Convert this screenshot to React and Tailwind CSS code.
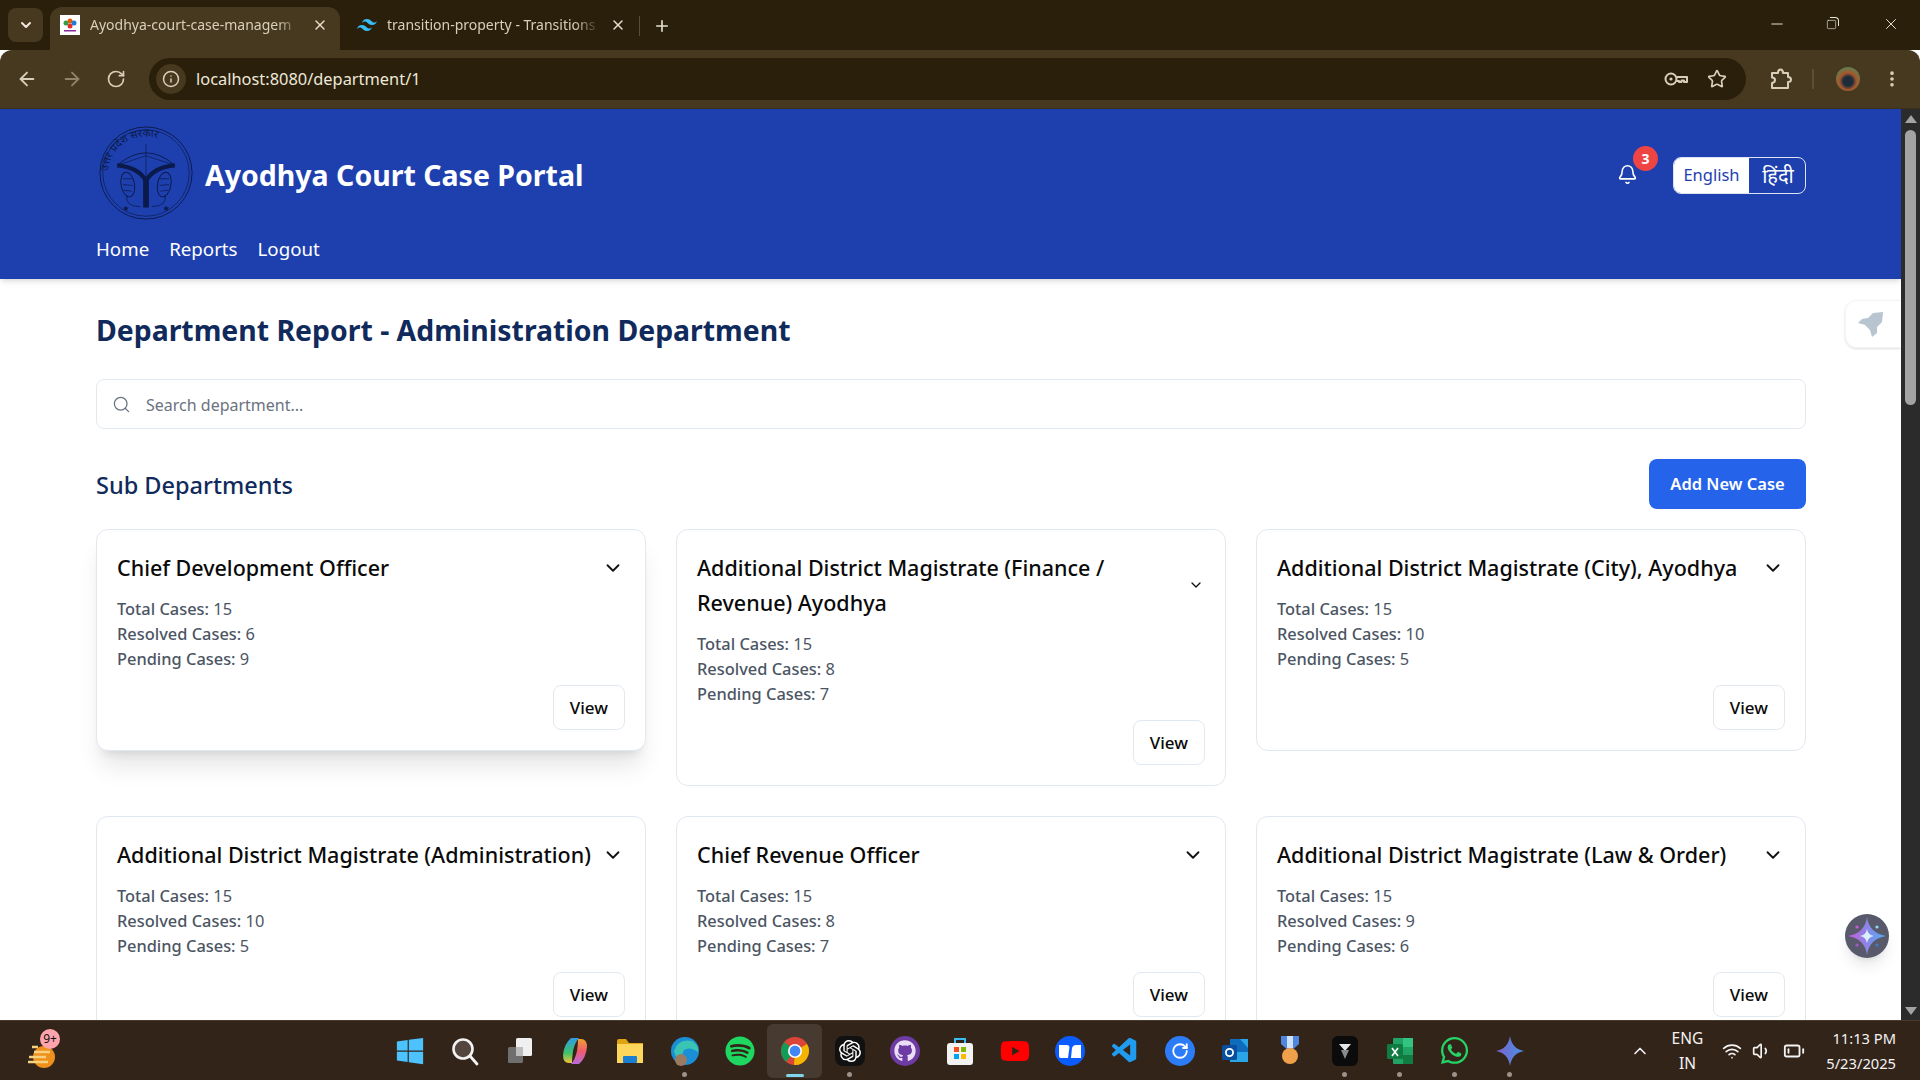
import React from 'react';
import { ArrowLeft, ArrowRight, Bell, ChevronDown, ChevronUp, EllipsisVertical, Info, Minus, Plus, RotateCw, Search, Square, Star, X, Wifi, Volume1, BatteryLow } from 'lucide-react';
import { FaSpotify, FaGithub, FaWhatsapp, FaYoutube, FaWindows } from 'react-icons/fa';
import { SiTailwindcss, SiOpenai } from 'react-icons/si';
import { VscVscode } from 'react-icons/vsc';

const font = { fontFamily: '"Noto Sans", "Open Sans", sans-serif' };

const departments = [
  { name: 'Chief Development Officer', total: 15, resolved: 6, pending: 9, hover: true },
  { name: 'Additional District Magistrate (Finance / Revenue) Ayodhya', total: 15, resolved: 8, pending: 7, small: true },
  { name: 'Additional District Magistrate (City), Ayodhya', total: 15, resolved: 10, pending: 5 },
  { name: 'Additional District Magistrate (Administration)', total: 15, resolved: 10, pending: 5 },
  { name: 'Chief Revenue Officer', total: 15, resolved: 8, pending: 7 },
  { name: 'Additional District Magistrate (Law & Order)', total: 15, resolved: 9, pending: 6 },
];

// UP government emblem
const Emblem = () => (
  <svg viewBox="0 0 100 100" className="w-[96px] h-[96px] shrink-0" fill="none" stroke="#0b1a4a">
    <circle cx="50" cy="50" r="48" strokeWidth="1" />
    <circle cx="50" cy="50" r="45" strokeWidth="0.7" />
    <path id="emblemArc" d="M10 52 A40 40 0 0 1 90 52" stroke="none" />
    <text fontSize="11" fill="#0b1a4a" stroke="none" style={{ fontFamily: '"Noto Sans", sans-serif' }}>
      <textPath href="#emblemArc" startOffset="3%">उत्तर प्रदेश सरकार</textPath>
    </text>
    <path d="M20 42 Q50 16 80 42" strokeWidth="1" />
    <path d="M20 42 L50 32 L80 42 M50 20 V56" strokeWidth="0.7" />
    <path d="M20 42 Q42 44 50 58 Q58 44 80 42" strokeWidth="4.5" />
    <path d="M50 56 V86" strokeWidth="6" />
    <ellipse cx="31" cy="62" rx="7" ry="13" strokeWidth="1" transform="rotate(-10 31 62)" />
    <ellipse cx="69" cy="62" rx="7" ry="13" strokeWidth="1" transform="rotate(10 69 62)" />
    <path d="M30 73 Q28 85 44 85 M70 73 Q72 85 56 85 M26 56 L36 56 M26 62 L36 63 M27 68 L35 69 M64 56 L74 56 M64 63 L74 62 M65 69 L73 68" strokeWidth="0.8" />
    <path d="M29 84 l1 2 2 0 -1.6 1.4 .6 2 -2-1.2 -2 1.2 .6-2 -1.6-1.4 2 0z M71 84 l1 2 2 0 -1.6 1.4 .6 2 -2-1.2 -2 1.2 .6-2 -1.6-1.4 2 0z" fill="#0b1a4a" stroke="none" />
  </svg>
);

const Tab = ({ active, icon, title, width }) => (
  <div className={`flex items-center h-[43px] rounded-t-xl pb-[8px] pl-[10px] pr-[12px] gap-[10px] ${width} ${active ? 'bg-[#47391f]' : ''}`}>
    {icon}
    <span className="flex-1 overflow-hidden whitespace-nowrap text-[14px] text-[#d8cfbb] [mask-image:linear-gradient(to_right,black_88%,transparent)]">{title}</span>
    <X size={16} className="text-[#e6dfcf] shrink-0" strokeWidth={2.2} />
  </div>
);

const Favicon = () => (
  <svg viewBox="0 0 20 20" className="w-[20px] h-[20px] shrink-0">
    <rect width="20" height="20" fill="#fff" />
    <circle cx="6" cy="8" r="2.5" fill="#2f9e44" />
    <circle cx="10" cy="6" r="2.5" fill="#e8590c" />
    <circle cx="14" cy="8" r="2.5" fill="#1c7ed6" />
    <circle cx="10" cy="11" r="2.5" fill="#e03131" />
    <rect x="4" y="15" width="12" height="1.5" fill="#862e9c" />
  </svg>
);

const KeyIcon = () => (
  <svg viewBox="0 0 24 14" className="w-[24px] h-[14px] mr-[19px]" fill="none" stroke="currentColor" strokeWidth="2">
    <circle cx="7" cy="7" r="5.5" />
    <circle cx="7" cy="7" r="1.6" fill="currentColor" stroke="none" />
    <path d="M12.5 5 H23 V10 H20 V8.5 H17.5 V10 H15 V9 H12.5" strokeLinejoin="round" />
  </svg>
);

const PuzzleIcon = () => (
  <svg viewBox="0 0 22 22" className="w-[22px] h-[22px] ml-[24px] mr-[20px]" fill="none" stroke="currentColor" strokeWidth="2" strokeLinejoin="round">
    <path d="M2 5 H8 Q8 1.5 10.5 1.5 Q13 1.5 13 5 H18 V9 Q21 9 21 11.5 Q21 14 18 14 V20 H2 V15 Q5 14.5 5 12 Q5 9.5 2 9.5 Z" />
  </svg>
);

const BrowserChrome = () => (
  <div className="shrink-0 text-[#d8cfbb]">
    <div className="h-[50px] bg-[#291f0a] flex items-end pl-[8px]">
      <div className="w-[35px] h-[34px] mb-[8px] mr-[7px] rounded-lg bg-[#47391f] flex items-center justify-center shrink-0">
        <ChevronDown size={16} strokeWidth={3} className="text-[#f0eadc]" />
      </div>
      <Tab active width="w-[290px]" icon={<Favicon />} title="Ayodhya-court-case-managem" />
      <Tab width="w-[298px]" icon={<SiTailwindcss size={20} className="text-[#38bdf8] shrink-0 ml-[7px]" />} title="transition-property - Transitions" />
      <div className="w-px h-[20px] bg-[#5c4e33] mb-[14px] ml-[1px]" />
      <Plus size={18} className="mb-[15px] ml-[13px] text-[#e6dfcf]" strokeWidth={2.2} />
      <div className="flex-1" />
      <div className="flex items-center self-start h-[48px] text-[#ebe5d8]">
        <Minus size={18} strokeWidth={1.3} className="mr-[40px]" />
        <div className="relative w-[12px] h-[12px] mr-[44px]">
          <Square size={11} strokeWidth={1.4} className="absolute left-0 bottom-0" />
          <div className="absolute right-[-1px] top-[-1px] w-[9px] h-[9px] border-t border-r border-[#ebe5d8] rounded-tr-sm" />
        </div>
        <X size={18} strokeWidth={1.3} className="mr-[20px]" />
      </div>
    </div>
    <div className="h-[59px] bg-[#47391f] rounded-t-xl border-b border-[#3b3019] flex items-center pl-[16px] pr-[18px]">
      <ArrowLeft size={22} strokeWidth={2} className="mr-[23px]" />
      <ArrowRight size={22} strokeWidth={2} className="mr-[23px] text-[#8f836b]" />
      <RotateCw size={20} strokeWidth={2} className="mr-[23px]" />
      <div className="flex-1 h-[42px] rounded-full bg-[#291f0a] flex items-center pl-[7px] pr-[19px]">
        <div className="w-[30px] h-[30px] rounded-full bg-[#47391f] flex items-center justify-center mr-[10px]">
          <Info size={18} strokeWidth={2} />
        </div>
        <span className="text-[16.4px] text-[#eee8da]">localhost:8080/department/1</span>
        <div className="flex-1" />
        <KeyIcon />
        <Star size={20} strokeWidth={2} />
      </div>
      <PuzzleIcon />
      <div className="w-[2px] h-[20px] bg-[#5c4e33] mr-[22px]" />
      <div className="w-[24px] h-[24px] rounded-full bg-[radial-gradient(circle_at_50%_60%,#1d2b3a_25%,#a8562c_45%,#5f7f4f_75%)] mr-[22px]" />
      <EllipsisVertical size={20} strokeWidth={2.4} />
    </div>
  </div>
);

const PageHeader = () => (
  <header className="bg-[#1e40af] h-[170px] pl-[96px] pr-[95px] shrink-0 shadow-md relative text-white">
    <div className="flex items-center justify-between h-[126px] pt-[2px]">
      <div className="flex items-center gap-[11px] ml-[2px]">
        <Emblem />
        <h1 className="text-[28.5px] font-bold mt-[4px]">Ayodhya Court Case Portal</h1>
      </div>
      <div className="flex items-center mt-[5px]">
        <div className="relative mr-[35px] mt-[-2px]">
          <Bell size={21} strokeWidth={1.8} />
          <span className="absolute top-[-18px] left-[16px] w-[25px] h-[25px] rounded-full bg-[#ef4444] text-[14px] font-bold flex items-center justify-center">3</span>
        </div>
        <div className="flex h-[37px] w-[133px] rounded-lg border border-[#dbe3f5] overflow-hidden">
          <span className="w-[75px] bg-white text-[#1e40af] text-[16.5px] flex items-center justify-center">English</span>
          <span className="flex-1 text-white text-[20px] flex items-center justify-center pl-[2px]">हिंदी</span>
        </div>
      </div>
    </div>
    <nav className="flex gap-[20px] text-[18.7px]">
      <span>Home</span>
      <span>Reports</span>
      <span>Logout</span>
    </nav>
  </header>
);

const DepartmentCard = ({ dept }) => (
  <div className={`bg-white border border-[#e2e8f0] rounded-xl p-[20px] ${dept.hover ? 'shadow-xl' : ''}`}>
    <div className="flex items-center justify-between gap-[8px]">
      <h3 className={`text-[21.5px] font-medium leading-[35px] text-[#0a0a0a] ${dept.small ? 'pr-[16px]' : ''}`}>{dept.name}</h3>
      <ChevronDown size={dept.small ? 16 : 22} strokeWidth={2} className="shrink-0 text-[#111] mr-[1px]" />
    </div>
    <div className="mt-[11px] text-[16.4px] leading-[25px] text-[#4b5563]">
      <p><span className="font-medium">Total Cases:</span> {dept.total}</p>
      <p><span className="font-medium">Resolved Cases:</span> {dept.resolved}</p>
      <p><span className="font-medium">Pending Cases:</span> {dept.pending}</p>
    </div>
    <div className="flex justify-end mt-[14px]">
      <button className="h-[45px] px-[16px] rounded-lg border border-[#e2e8f0] text-[17px] font-medium text-[#0a0a0a] bg-white">View</button>
    </div>
  </div>
);

const Content = () => (
  <div className="pl-[96px] pr-[95px]">
    <h2 className="text-[28.4px] font-bold text-[#102a5c] leading-[40px] mt-[31px]">Department Report - Administration Department</h2>
    <div className="mt-[29px] h-[50px] rounded-lg border border-[#e2e8f0] flex items-center pl-[15px]">
      <Search size={19} strokeWidth={1.6} className="text-[#6b7280] mr-[15px]" />
      <span className="text-[16px] text-[#6b7280] mt-[2px]">Search department...</span>
    </div>
    <div className="mt-[30px] flex items-center justify-between">
      <h2 className="text-[23.5px] font-medium text-[#102a5c] mt-[4px]">Sub Departments</h2>
      <button className="h-[50px] w-[157px] rounded-lg bg-[#2563eb] text-white text-[16.5px] font-semibold">Add New Case</button>
    </div>
    <div className="mt-[20px] grid grid-cols-3 gap-[30px] items-start">
      {departments.map((dept) => (
        <DepartmentCard key={dept.name} dept={dept} />
      ))}
    </div>
  </div>
);

const Sparkle = () => (
  <svg viewBox="0 0 44 44" className="w-[44px] h-[44px]">
    <defs>
      <linearGradient id="sparkleGrad" x1="0" x2="1">
        <stop offset="0" stopColor="#c85bd8" />
        <stop offset="1" stopColor="#4fb0f5" />
      </linearGradient>
    </defs>
    <circle cx="22" cy="22" r="22" fill="#585a6c" />
    <path d="M22 3 Q24 19 41 22 Q24 25 22 41 Q20 25 3 22 Q20 19 22 3Z" fill="url(#sparkleGrad)" />
    <path d="M22 15 Q23 21 29 22 Q23 23 22 29 Q21 23 15 22 Q21 21 22 15Z" fill="#d8f1ff" />
    <circle cx="12" cy="13" r="1.6" fill="#c85bd8" />
    <circle cx="32" cy="13" r="1.6" fill="#8fd8f8" />
    <circle cx="12" cy="31" r="1.6" fill="#a956c8" />
    <circle cx="32" cy="31" r="1.6" fill="#3f7fc0" />
  </svg>
);

const Scrollbar = () => (
  <div className="w-[19px] shrink-0 bg-[#2b2b2b] flex flex-col items-center pt-[6px] pb-[5px]">
    <div className="w-0 h-0 border-l-[6px] border-r-[6px] border-b-[8px] border-l-transparent border-r-transparent border-b-[#a3a3a3]" />
    <div className="w-[11px] h-[275px] mt-[7px] rounded-full bg-[#a3a3a3]" />
    <div className="flex-1" />
    <div className="w-0 h-0 border-l-[6px] border-r-[6px] border-t-[8px] border-l-transparent border-r-transparent border-t-[#a3a3a3]" />
  </div>
);

// taskbar icons, each drawn in a 30x30 box
const Svg30 = ({ children }) => <svg viewBox="0 0 30 30" className="w-[30px] h-[30px]">{children}</svg>;

const taskbarIcons = [
  { key: 'start', icon: <FaWindows size={30} className="text-[#4cc2ff]" /> },
  { key: 'search', icon: <Svg30><circle cx="13" cy="13" r="9.5" fill="#54463f" stroke="#f2f2f2" strokeWidth="2.6" /><path d="M20 20 L27 28" stroke="#f2f2f2" strokeWidth="2.8" strokeLinecap="round" /></Svg30> },
  { key: 'view', icon: <Svg30><rect x="3" y="11" width="15" height="16" rx="1.5" fill="#6f6f6f" /><rect x="11" y="2" width="16" height="18" rx="1.5" fill="#f0f0f0" /><rect x="11" y="11" width="7" height="9" fill="#bcbcbc" /></Svg30> },
  { key: 'copilot', icon: <Svg30><defs><linearGradient id="copilotLeft" x1="0" x2="0" y1="0" y2="1"><stop offset="0" stopColor="#2f9be8" /><stop offset=".6" stopColor="#3ec26b" /><stop offset="1" stopColor="#f5c33b" /></linearGradient><linearGradient id="copilotRight" x1="0" x2="0" y1="0" y2="1"><stop offset="0" stopColor="#f0a030" /><stop offset=".5" stopColor="#ef5a6f" /><stop offset="1" stopColor="#b76be0" /></linearGradient></defs><path d="M11 2 H19 Q15 6 13 15 Q12 22 12 27 H9 Q3 27 3 19 Q4 8 11 2Z" fill="url(#copilotLeft)" /><path d="M19 28 H11 Q15 24 17 15 Q18 8 18 3 H21 Q27 3 27 11 Q26 22 19 28Z" fill="url(#copilotRight)" /></Svg30> },
  { key: 'files', icon: <Svg30><path d="M2 5 Q2 3 4 3 H11 L14 7 H28 V27 H2Z" fill="#e0a412" /><rect x="2" y="8" width="26" height="19" fill="#ffd65c" /><rect x="8" y="20" width="14" height="7" rx="1" fill="#1b7fd1" /></Svg30> },
  { key: 'edge', icon: <Svg30><circle cx="15" cy="15" r="14" fill="#1b8fd6" /><path d="M4 15 Q8 2 22 5 Q29 9 28 16 Q20 10 14 14 Q10 20 16 27 Q6 26 4 15Z" fill="#3ac4b4" /><circle cx="11" cy="24" r="6" fill="#9a7b62" /></Svg30>, dot: true },
  { key: 'spotify', icon: <FaSpotify size={30} className="text-[#1ed760]" /> },
  { key: 'chrome', icon: <Svg30><circle cx="15" cy="15" r="14" fill="#db4437" /><path d="M15 15 L3 22 A14 14 0 0 1 8 3 Z" fill="#0f9d58" transform="rotate(-20 15 15)" /><path d="M15 15 L27 8 A14 14 0 0 1 14 29Z" fill="#f4b400" /><circle cx="15" cy="15" r="7" fill="#fff" /><circle cx="15" cy="15" r="5.4" fill="#4285f4" /></Svg30>, active: true },
  { key: 'chatgpt', icon: <div className="w-[30px] h-[30px] rounded-lg bg-[#111] flex items-center justify-center"><SiOpenai size={22} className="text-white" /></div>, dot: true },
  { key: 'github', icon: <div className="w-[30px] h-[30px] rounded-full bg-[#6e3aa3] flex items-center justify-center"><FaGithub size={22} className="text-[#e9def4]" /></div> },
  { key: 'store', icon: <Svg30><rect x="2" y="7" width="26" height="22" rx="3" fill="#f2f2f2" /><path d="M10 7 V3 H20 V7" fill="none" stroke="#38bdf8" strokeWidth="2" /><rect x="9" y="11" width="5" height="5" fill="#f25022" /><rect x="16" y="11" width="5" height="5" fill="#7fba00" /><rect x="9" y="18" width="5" height="5" fill="#00a4ef" /><rect x="16" y="18" width="5" height="5" fill="#ffb900" /></Svg30> },
  { key: 'youtube', icon: <FaYoutube size={30} className="text-[#ff0000]" /> },
  { key: 'zoom', icon: <div className="w-[30px] h-[30px] rounded-full bg-[#0b5cff] flex items-center justify-center"><svg viewBox="0 0 22 14" className="w-[22px] h-[14px]"><path d="M0 1 H8 Q10 1 10.5 3 L9 14 H2 Q0 14 0 12Z M12 14 L13 4 Q14 1 17 1 H22 V14Z" fill="#fff" /></svg></div> },
  { key: 'vscode', icon: <VscVscode size={30} className="text-[#1f9cf0]" /> },
  { key: 'sync', icon: <div className="w-[30px] h-[30px] rounded-full bg-[#2b7cf6] flex items-center justify-center"><RotateCw size={18} className="text-white" strokeWidth={2.4} /></div> },
  { key: 'outlook', icon: <Svg30><path d="M10 3 H28 V26 H10Z" fill="#2aa5e8" /><path d="M10 3 L20 3 L28 12 V16 H10Z" fill="#0f6cbd" /><rect x="2" y="9" width="15" height="15" rx="1.5" fill="#0a4f9e" /><circle cx="9.5" cy="16.5" r="3.6" fill="none" stroke="#fff" strokeWidth="1.8" /></Svg30> },
  { key: 'medal', icon: <Svg30><path d="M6 0 H24 V8 L15 16 L6 8Z" fill="#4f86e0" /><path d="M12 0 H18 V12 H12Z" fill="#cfe0fa" /><circle cx="15" cy="20" r="8" fill="#f0a04b" /></Svg30> },
  { key: 'app', icon: <div className="w-[26px] h-[30px] rounded-md bg-[#0b0b0b] flex items-center justify-center"><svg viewBox="0 0 14 18" className="w-[14px] h-[18px]"><path d="M1 2 H13 L7 9Z" fill="#e6e6e6" /><path d="M3 8 H11 L7 17Z" fill="#8a8a8a" /></svg></div>, dot: true },
  { key: 'excel', icon: <Svg30><rect x="8" y="2" width="20" height="26" rx="1" fill="#21a366" /><rect x="18" y="2" width="10" height="9" fill="#33c481" /><rect x="18" y="19" width="10" height="9" fill="#107c41" /><rect x="2" y="8" width="16" height="15" rx="1.5" fill="#107c41" /><path d="M7 12 L13 20 M13 12 L7 20" stroke="#fff" strokeWidth="1.6" /></Svg30>, dot: true },
  { key: 'whatsapp', icon: <FaWhatsapp size={31} className="text-[#25d366]" />, dot: true },
  { key: 'gemini', icon: <Svg30><defs><linearGradient id="geminiGrad" x1="0" x2="1"><stop offset="0" stopColor="#7a63c8" /><stop offset="1" stopColor="#4a90e8" /></linearGradient></defs><path d="M15 0 Q17 13 29 15 Q17 17 15 30 Q13 17 1 15 Q13 13 15 0Z" fill="url(#geminiGrad)" /></Svg30>, dot: true },
];

const Taskbar = () => (
  <div className="relative h-[60px] shrink-0 bg-[#33241a] border-t border-[#4a3b2f] flex items-center text-[#f3f3f3]">
    <div className="relative w-[382px] shrink-0 h-full">
      <svg viewBox="0 0 36 36" className="w-[36px] h-[36px] ml-[24px] mt-[14px]">
        <circle cx="20" cy="22" r="11" fill="#ef8f1c" />
        <path d="M8 12 H14 M10 17 H26 M5 22 H22 M4 27 H24" stroke="#f6d27e" strokeWidth="2.6" />
      </svg>
      <span className="absolute left-[40px] top-[8px] w-[20px] h-[20px] rounded-full bg-[#ffa4ad] text-[#111] text-[12px] flex items-center justify-center">9+</span>
    </div>
    <div className="flex">
      {taskbarIcons.map((item) => (
        <div key={item.key} className={`relative w-[55px] h-[54px] rounded-md flex items-center justify-center ${item.active ? 'bg-[#463a31]' : ''}`}>
          {item.icon}
          {item.dot && <span className="absolute bottom-[1px] w-[5px] h-[5px] rounded-full bg-[#9b928c]" />}
          {item.active && <span className="absolute bottom-[1px] w-[18px] h-[3px] rounded-full bg-[#7fd6e8]" />}
        </div>
      ))}
    </div>
    <div className="flex-1" />
    <ChevronUp size={20} strokeWidth={2} className="mr-[22px]" />
    <div className="text-[15.5px] leading-[25px] text-center mr-[19px]">
      <p>ENG</p>
      <p>IN</p>
    </div>
    <Wifi size={20} strokeWidth={2} className="mr-[10px]" />
    <Volume1 size={20} strokeWidth={2} className="mr-[11px]" />
    <BatteryLow size={22} strokeWidth={2} className="mr-[21px]" />
    <div className="text-[14.7px] leading-[25px] text-right mr-[24px]">
      <p>11:13 PM</p>
      <p>5/23/2025</p>
    </div>
  </div>
);

const App = () => {
  return (
    <div className="h-screen w-full flex flex-col overflow-hidden bg-white" style={font}>
      <BrowserChrome />
      <div className="flex-1 min-h-0 flex">
        <div className="relative flex-1 min-w-0 overflow-hidden flex flex-col">
          <PageHeader />
          <Content />
          {/* floating widgets */}
          <div className="absolute right-0 top-[191px] w-[56px] h-[48px] bg-white rounded-l-xl border border-r-0 border-[#f1f5f9] shadow-sm flex items-center pl-[12px]">
            <svg viewBox="0 0 26 26" className="w-[26px] h-[26px]"><path d="M25 1 L24 11 L19 16 L19 22 L14 26 L12 19 L7 14 L0 12 L4 8 L10 7 L15 2Z" fill="#b8c4d0" /></svg>
          </div>
          <div className="absolute right-[12px] top-[805px] rounded-full shadow-lg">
            <Sparkle />
          </div>
        </div>
        <Scrollbar />
      </div>
      <Taskbar />
    </div>
  );
};

export default App;
